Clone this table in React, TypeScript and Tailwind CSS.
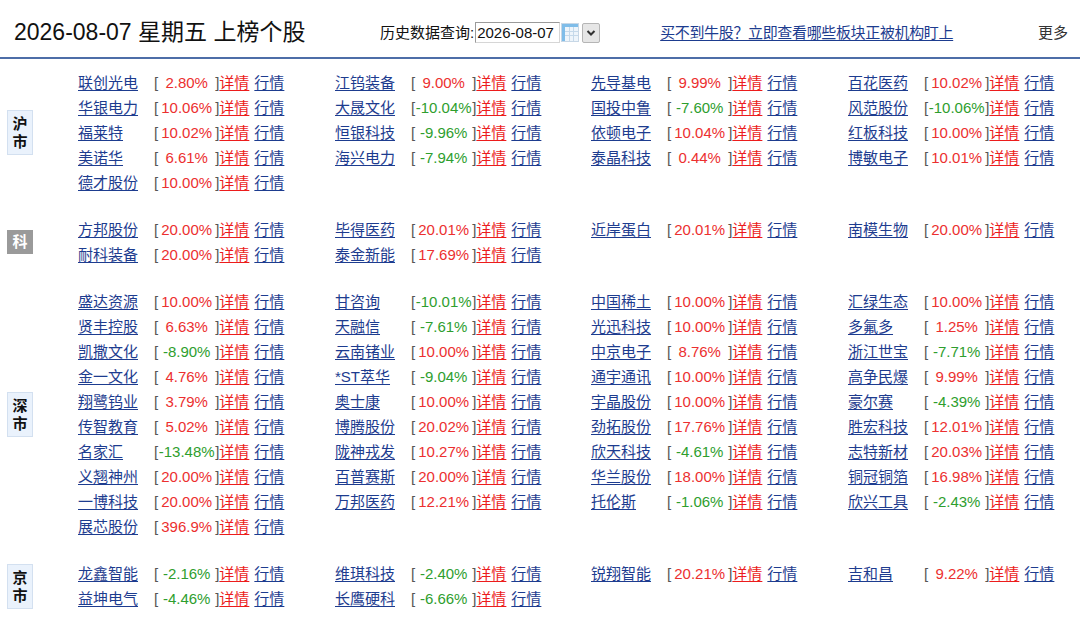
import React from "react";

type Stock = [string, string];

const FONT = { fontFamily: '"Liberation Sans", Arial, "Noto Sans CJK SC", sans-serif' };

const sections: { label: string; kind: "box" | "gray"; items: Stock[] }[] = [
  {
    label: "沪市",
    kind: "box",
    items: [
      ["联创光电", "2.80%"], ["江钨装备", "9.00%"], ["先导基电", "9.99%"], ["百花医药", "10.02%"],
      ["华银电力", "10.06%"], ["大晟文化", "-10.04%"], ["国投中鲁", "-7.60%"], ["风范股份", "-10.06%"],
      ["福莱特", "10.02%"], ["恒银科技", "-9.96%"], ["依顿电子", "10.04%"], ["红板科技", "10.00%"],
      ["美诺华", "6.61%"], ["海兴电力", "-7.94%"], ["泰晶科技", "0.44%"], ["博敏电子", "10.01%"],
      ["德才股份", "10.00%"],
    ],
  },
  {
    label: "科",
    kind: "gray",
    items: [
      ["方邦股份", "20.00%"], ["毕得医药", "20.01%"], ["近岸蛋白", "20.01%"], ["南模生物", "20.00%"],
      ["耐科装备", "20.00%"], ["泰金新能", "17.69%"],
    ],
  },
  {
    label: "深市",
    kind: "box",
    items: [
      ["盛达资源", "10.00%"], ["甘咨询", "-10.01%"], ["中国稀土", "10.00%"], ["汇绿生态", "10.00%"],
      ["贤丰控股", "6.63%"], ["天融信", "-7.61%"], ["光迅科技", "10.00%"], ["多氟多", "1.25%"],
      ["凯撒文化", "-8.90%"], ["云南锗业", "10.00%"], ["中京电子", "8.76%"], ["浙江世宝", "-7.71%"],
      ["金一文化", "4.76%"], ["*ST萃华", "-9.04%"], ["通宇通讯", "10.00%"], ["高争民爆", "9.99%"],
      ["翔鹭钨业", "3.79%"], ["奥士康", "10.00%"], ["宇晶股份", "10.00%"], ["豪尔赛", "-4.39%"],
      ["传智教育", "5.02%"], ["博腾股份", "20.02%"], ["劲拓股份", "17.76%"], ["胜宏科技", "12.01%"],
      ["名家汇", "-13.48%"], ["陇神戎发", "10.27%"], ["欣天科技", "-4.61%"], ["志特新材", "20.03%"],
      ["义翘神州", "20.00%"], ["百普赛斯", "20.00%"], ["华兰股份", "18.00%"], ["铜冠铜箔", "16.98%"],
      ["一博科技", "20.00%"], ["万邦医药", "12.21%"], ["托伦斯", "-1.06%"], ["欣兴工具", "-2.43%"],
      ["展芯股份", "396.9%"],
    ],
  },
  {
    label: "京市",
    kind: "box",
    items: [
      ["龙鑫智能", "-2.16%"], ["维琪科技", "-2.40%"], ["锐翔智能", "20.21%"], ["吉和昌", "9.22%"],
      ["益坤电气", "-4.46%"], ["长鹰硬科", "-6.66%"],
    ],
  },
];

function Cell({ name, pct }: { name: string; pct: string }) {
  const neg = pct.startsWith("-");
  return (
    <div className="flex items-center whitespace-nowrap text-[15px] leading-none">
      <span className="w-[76px] text-[#1d3c8f] underline underline-offset-2">{name}</span>
      <span className="text-[#555]">[</span>
      <span className={`inline-block w-[57px] text-center ${neg ? "text-[#2e9e2e]" : "text-[#ec2f2f]"}`}>{pct}</span>
      <span className="text-[#555]">]</span>
      <span className="text-[#ec1c1c] underline underline-offset-2">详情</span>
      <span className="ml-[5px] text-[#1d3c8f] underline underline-offset-2">行情</span>
    </div>
  );
}

function Label({ label, kind }: { label: string; kind: "box" | "gray" }) {
  if (kind === "gray") {
    return (
      <div className="ml-[7px] flex h-[24px] w-[26px] items-center justify-center bg-[#9a9a9a] text-[15px] font-bold text-white">
        {label}
      </div>
    );
  }
  return (
    <div className="ml-[7px] flex h-[45px] w-[26px] flex-col items-center justify-center gap-[3px] border border-[#d3e0f0] bg-[#eaf2fc] text-[15px] font-bold leading-none text-[#111]">
      {label.split("").map((c) => (
        <span key={c}>{c}</span>
      ))}
    </div>
  );
}

function CalendarIcon() {
  return (
    <svg width="18" height="19" viewBox="0 0 18 19" className="ml-[1px]">
      <rect x="0.5" y="0.5" width="17" height="18" fill="#eef5fb" stroke="#c7d7e6" />
      <rect x="1" y="1" width="16" height="3" fill="#7fbde9" />
      <rect x="1" y="4" width="3" height="14" fill="#7fbde9" />
      <g stroke="#c5d9ea" strokeWidth="1">
        <line x1="4" y1="8.5" x2="17" y2="8.5" />
        <line x1="4" y1="12.5" x2="17" y2="12.5" />
        <line x1="8.5" y1="4" x2="8.5" y2="18" />
        <line x1="12.5" y1="4" x2="12.5" y2="18" />
      </g>
    </svg>
  );
}

export default function App() {
  return (
    <div className="h-[631px] w-[1080px] overflow-hidden bg-white text-[#111]" style={FONT}>
      <div className="flex h-[59px] items-center border-b-2 border-[#4d6ea8] pt-[8px]">
        <div className="w-[380px] shrink-0 pl-[14px] text-[23px] leading-none text-[#111]">2026-08-07 星期五 上榜个股</div>
        <div className="flex items-center text-[15px] leading-none">
          <span>历史数据查询:</span>
          <div className="ml-[1px] flex h-[21px] w-[85px] items-center border border-[#9a9a9a] border-b-[#d6d6d6] border-r-[#d6d6d6] px-[1px] text-[15px]">
            2026-08-07
          </div>
          <CalendarIcon />
          <div className="ml-[3px] flex h-[20px] w-[18px] items-center justify-center rounded-[2px] border border-[#b5b5b5] bg-[#e6e6e6]">
            <svg width="10" height="8" viewBox="0 0 10 8">
              <path d="M1.5 2 L5 5.5 L8.5 2" fill="none" stroke="#333" strokeWidth="2" />
            </svg>
          </div>
        </div>
        <span className="ml-[60px] text-[15px] leading-none tracking-[-0.35px] text-[#1d3c8f] underline underline-offset-2">
          买不到牛股？立即查看哪些板块正被机构盯上
        </span>
        <span className="ml-auto mr-[12px] text-[15px] leading-none text-[#333]">更多</span>
      </div>
      {sections.map((s) => (
        <div key={s.label} className="flex py-[11px]">
          <div className="flex w-[78px] shrink-0 items-center">
            <Label label={s.label} kind={s.kind} />
          </div>
          <div className="grid flex-1 auto-rows-[25px] grid-cols-[257px_256px_257px_1fr]">
            {s.items.map(([n, p]) => (
              <Cell key={n} name={n} pct={p} />
            ))}
          </div>
        </div>
      ))}
    </div>
  );
}
